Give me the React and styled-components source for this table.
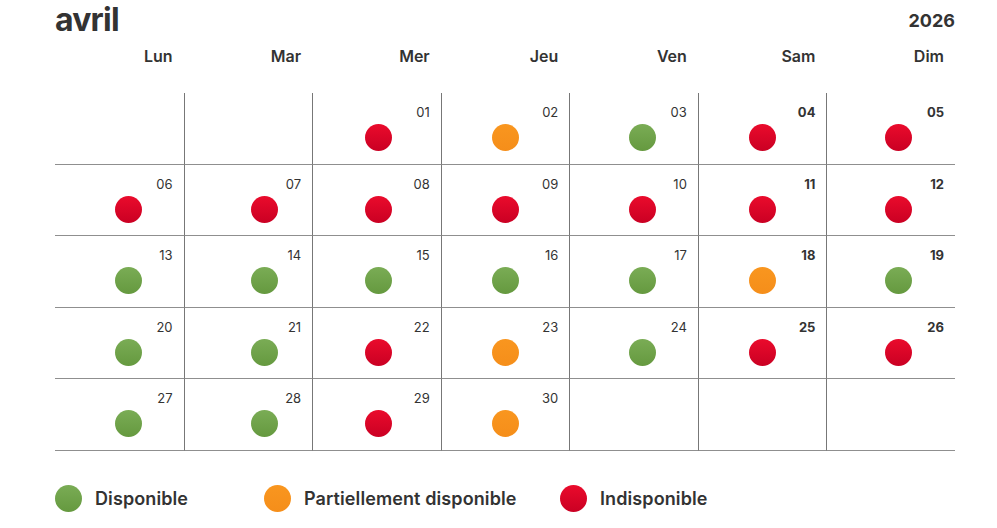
import React from 'react';
import styled, { createGlobalStyle } from 'styled-components';

const GlobalStyle = createGlobalStyle`
  body {
    margin: 0;
    background: #ffffff;
    font-family: Inter, "Noto Sans", sans-serif;
    color: #333333;
  }
`;

const Page = styled.div`
  width: 900px;
  padding: 0 42px 0 55px;
`;

const Header = styled.div`
  display: flex;
  justify-content: space-between;
  align-items: center;
  height: 40px;
`;

const MonthTitle = styled.h1`
  margin: 0;
  font-size: 32px;
  line-height: 40px;
  font-weight: 700;
  color: #333333;
  letter-spacing: -0.8px;
`;

const Year = styled.span`
  font-size: 18px;
  font-weight: 700;
  color: #333333;
`;

const WeekRow = styled.div`
  display: grid;
  grid-template-columns: repeat(7, 1fr);
  height: 53px;
`;

const WeekDay = styled.div`
  text-align: right;
  padding: 6px 11px 0 0;
  font-size: 16px;
  font-weight: 600;
  line-height: 20px;
  color: #333333;
`;

const Grid = styled.div`
  display: grid;
  grid-template-columns: repeat(7, 1fr);
  grid-auto-rows: 71.5px;
`;

const Cell = styled.div`
  box-sizing: border-box;
  border-bottom: 1px solid #8f8f8f;
  border-left: ${p => (p.$first ? 'none' : '1px solid #777777')};
  display: flex;
  flex-direction: column;
  align-items: center;
`;

const DayNumber = styled.span`
  align-self: flex-end;
  padding: 11px 11px 0 0;
  font-size: 13px;
  line-height: 16px;
  font-weight: ${p => (p.$weekend ? 700 : 400)};
  color: #333333;
`;

const colors = {
  ok: 'linear-gradient(180deg, #7aac55 0%, #65993f 100%)',
  part: 'linear-gradient(180deg, #f9961f 0%, #f58e1a 100%)',
  no: 'linear-gradient(180deg, #ea0b2c 0%, #ca0023 100%)',
};

const Dot = styled.span`
  display: block;
  width: 27px;
  height: 27px;
  border-radius: 50%;
  margin-top: ${p => (p.$legend ? '0' : '4px')};
  background: ${p => colors[p.$status]};
  flex-shrink: 0;
`;

const Legend = styled.div`
  display: grid;
  grid-template-columns: 209px 296px auto;
  margin-top: 34px;
`;

const LegendItem = styled.div`
  display: flex;
  align-items: center;
  gap: 13px;
  font-size: 18px;
  font-weight: 600;
  letter-spacing: 0.1px;
  color: #333333;
`;

const days = ['Lun', 'Mar', 'Mer', 'Jeu', 'Ven', 'Sam', 'Dim'];

// dots are not quite centred in the source layout
const dotShift = [9, 16, 2, 0, 8, 0, 7];

const status = {
  1: 'no', 2: 'part', 3: 'ok', 4: 'no', 5: 'no',
  6: 'no', 7: 'no', 8: 'no', 9: 'no', 10: 'no', 11: 'no', 12: 'no',
  13: 'ok', 14: 'ok', 15: 'ok', 16: 'ok', 17: 'ok', 18: 'part', 19: 'ok',
  20: 'ok', 21: 'ok', 22: 'no', 23: 'part', 24: 'ok', 25: 'no', 26: 'no',
  27: 'ok', 28: 'ok', 29: 'no', 30: 'part',
};

const cells = [];
for (let i = 0; i < 35; i++) {
  const d = i - 1;
  cells.push(d >= 1 && d <= 30 ? d : null);
}

const App = () => (
  <>
    <GlobalStyle />
    <Page>
      <Header>
        <MonthTitle>avril</MonthTitle>
        <Year>2026</Year>
      </Header>
      <WeekRow>
        {days.map(d => <WeekDay key={d}>{d}</WeekDay>)}
      </WeekRow>
      <Grid>
        {cells.map((d, i) => (
          <Cell key={i} $first={i % 7 === 0}>
            {d && (
              <>
                <DayNumber $weekend={i % 7 >= 5}>{String(d).padStart(2, '0')}</DayNumber>
                <Dot
                  $status={status[d]}
                  style={{ transform: `translateX(${dotShift[i % 7]}px)` }}
                />
              </>
            )}
          </Cell>
        ))}
      </Grid>
      <Legend>
        <LegendItem><Dot $legend $status="ok" />Disponible</LegendItem>
        <LegendItem><Dot $legend $status="part" />Partiellement disponible</LegendItem>
        <LegendItem><Dot $legend $status="no" />Indisponible</LegendItem>
      </Legend>
    </Page>
  </>
);

export default App;
